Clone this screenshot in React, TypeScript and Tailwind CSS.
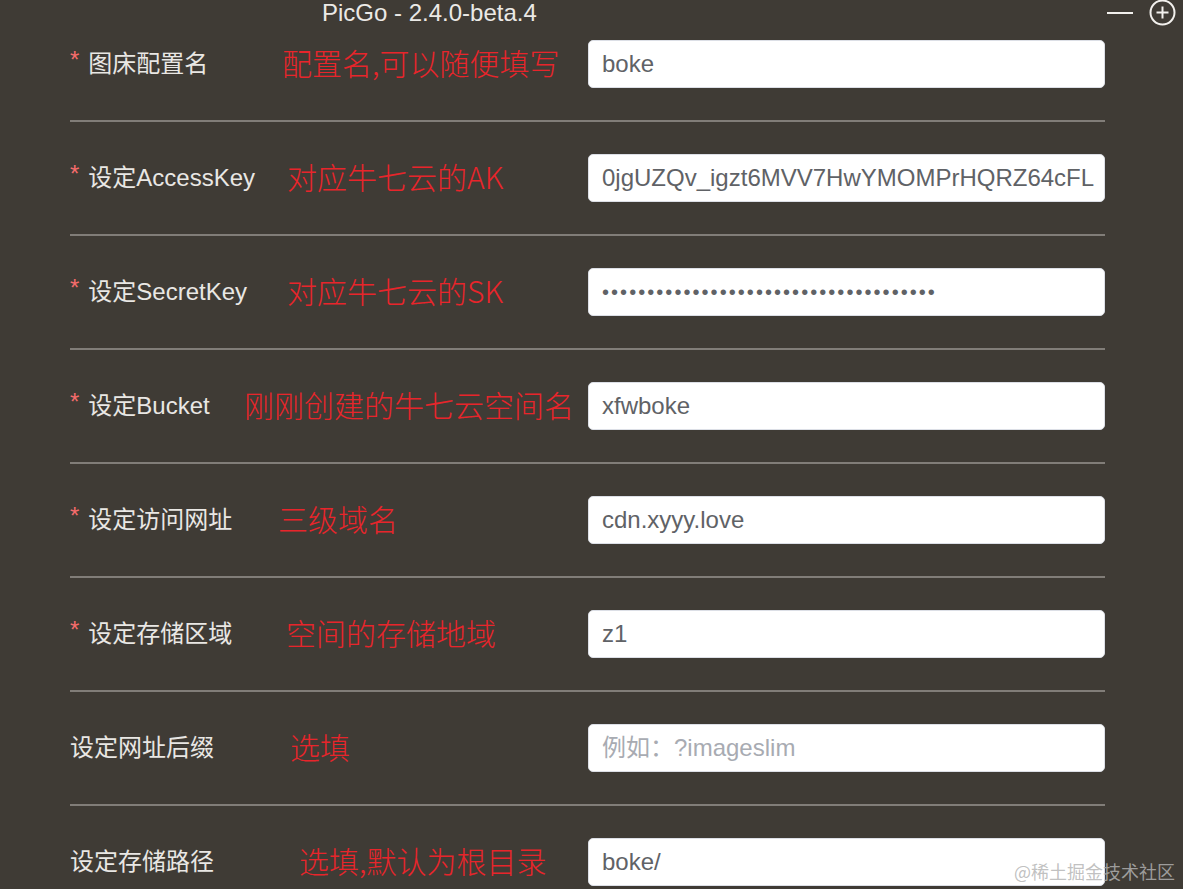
import React from "react";

type Row = {
  label: string;
  required: boolean;
  note: string;
  noteMl: string;
  value?: string;
  placeholder?: string;
  password?: boolean;
};

const rows: Row[] = [
  { label: "图床配置名", required: true, note: "配置名,可以随便填写", noteMl: "ml-[38px]", value: "boke" },
  { label: "设定AccessKey", required: true, note: "对应牛七云的AK", noteMl: "ml-[43px]", value: "0jgUZQv_igzt6MVV7HwYMOMPrHQRZ64cFL" },
  { label: "设定SecretKey", required: true, note: "对应牛七云的SK", noteMl: "ml-[43px]", password: true },
  { label: "设定Bucket", required: true, note: "刚刚创建的牛七云空间名", noteMl: "ml-0", value: "xfwboke" },
  { label: "设定访问网址", required: true, note: "三级域名", noteMl: "ml-[34px]", value: "cdn.xyyy.love" },
  { label: "设定存储区域", required: true, note: "空间的存储地域", noteMl: "ml-[42px]", value: "z1" },
  { label: "设定网址后缀", required: false, note: "选填", noteMl: "ml-[46px]", placeholder: "例如：?imageslim" },
  { label: "设定存储路径", required: false, note: "选填,默认为根目录", noteMl: "ml-[55px]", value: "boke/" },
];

const sans = "font-['Liberation_Sans','Noto_Sans_CJK_SC',sans-serif]";
const cjk = "font-['Noto_Sans_CJK_SC',sans-serif]";

export default function App() {
  return (
    <div className={`relative h-[889px] w-[1183px] overflow-hidden bg-[#3f3b35] ${sans}`}>
      {/* title bar */}
      <div className="absolute left-0 top-0 flex h-[26px] w-full items-center">
        <div className="ml-[322px] text-[24px] leading-none text-[#ebe9e6]">PicGo - 2.4.0-beta.4</div>
        <div className="ml-auto mr-[7px] flex items-center gap-[16px]">
          <div className="h-[2px] w-[26px] bg-[#f2f0ed]" />
          <svg width="27" height="27" viewBox="0 0 27 27" className="-mt-[2px]">
            <circle cx="13.5" cy="13.5" r="12" fill="none" stroke="#f2f0ed" strokeWidth="2" />
            <path d="M13.5 7.5v12M7.5 13.5h12" stroke="#f2f0ed" strokeWidth="2" />
          </svg>
        </div>
      </div>

      {/* form */}
      <div className="ml-[70px] w-[1035px] pt-[8px]">
        {rows.map((r, i) => (
          <div key={i} className="flex h-[114px] items-center border-b-2 border-[#817d78]">
            <div className="flex w-[174px] shrink-0 items-center whitespace-nowrap text-[24px] text-[#e9e7e4]">
              {r.required && <span className="-mt-[8px] mr-[9px] text-[24px] leading-none text-[#f56c6c]">*</span>}
              <span>{r.label}</span>
            </div>
            <div className="flex-1">
              <span className={`${r.noteMl} ${cjk} inline-block whitespace-nowrap text-[30px] font-light leading-none text-[#e8252b]`}>
                {r.note}
              </span>
            </div>
            <div className="flex h-[48px] w-[517px] shrink-0 items-center overflow-hidden rounded-[5px] border border-[#dcdfe6] bg-white px-[13px] text-[24px] text-[#606266]">
              {r.password ? (
                <span className="text-[20px] tracking-[2.05px] text-[#606266]">{"•".repeat(37)}</span>
              ) : r.placeholder ? (
                <span className="whitespace-nowrap text-[#a8abb2]">{r.placeholder}</span>
              ) : (
                <span className="whitespace-nowrap">{r.value}</span>
              )}
            </div>
          </div>
        ))}
      </div>

      <div className={`absolute bottom-[9px] right-[8px] text-[18px] leading-none text-[rgba(179,179,179,0.83)] ${cjk}`}>
        @稀土掘金技术社区
      </div>
    </div>
  );
}
